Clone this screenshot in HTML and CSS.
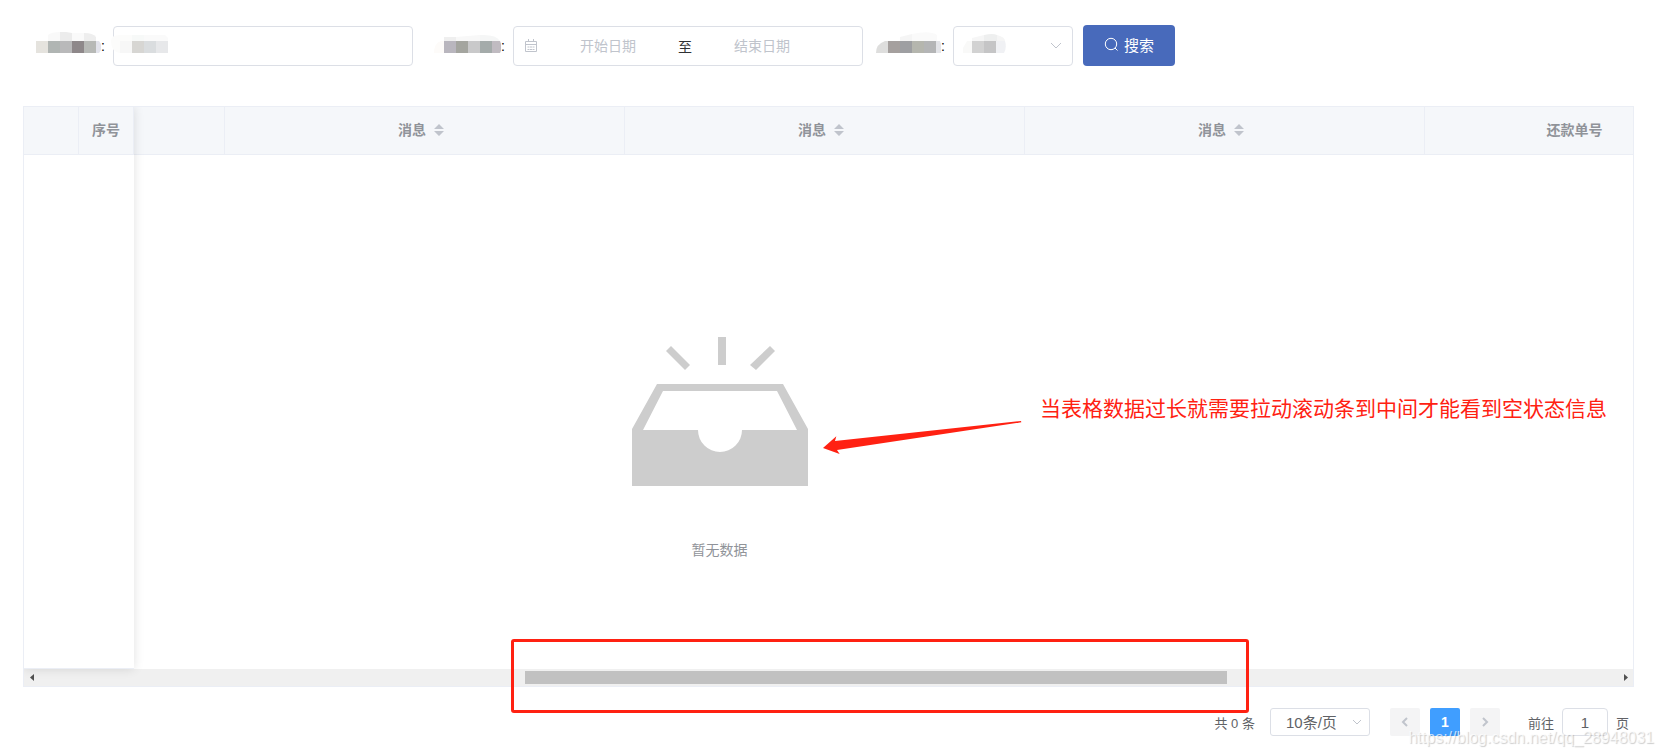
FILE: index.html
```html
<!DOCTYPE html>
<html lang="zh-CN">
<head>
  <meta charset="UTF-8">
  <meta name="viewport" content="width=device-width, initial-scale=1.0">
  <title>消息</title>
  <link rel="stylesheet" href="styles.css">
</head>
<body>

  <div class="page">
    <form class="search-form">
      <div class="form-item">
        <label class="form-label" for="keyword">
          <svg class="mosaic" width="65" height="22" viewBox="0 0 65 22">
            <path fill="#f9f9f9" d="M12 9V3q3-3 12-3v9z"/>
            <path fill="#ececec" d="M24 0h6l6 1v8H24z"/>
            <path fill="#fafafa" d="M36 1h12v8H36z"/>
            <path fill="#eeeeee" d="M48 1q9 0 12 4v4H48z"/>
            <path fill="#e5e3de" d="M0 9h12v12H0z"/>
            <path fill="#b0b5b3" d="M12 9h12v12H12z"/>
            <path fill="#b9b9ba" d="M24 9h12v12H24z"/>
            <path fill="#8e888a" d="M36 9h12v12H36z"/>
            <path fill="#b7b9b6" d="M48 9h12v12H48z"/>
            <path fill="#e2e3eb" d="M60 9h3l2 3v6l-2 3h-3z"/>
          </svg>:
        </label>
        <div class="field field-text">
          <input class="input" id="keyword" type="text">
          <svg class="mosaic-value" width="57" height="22" viewBox="0 0 57 22">
            <path fill="#fcfcfb" d="M0 9q0-6 9-6h12v6H9v12Q0 20 0 9z"/>
            <path fill="#f7f9f8" d="M21 3h12v6H21z"/>
            <path fill="#fafafa" d="M33 3h21l3 3v3H33z"/>
            <path fill="#f7f7f7" d="M9 9h12v12H9z"/>
            <path fill="#d7d6d3" d="M21 9h12v12H21z"/>
            <path fill="#dadddf" d="M33 9h12v12H33z"/>
            <path fill="#e7e8ea" d="M45 9h12v12H45z"/>
          </svg>
        </div>
      </div>

      <div class="form-item form-item-date">
        <label class="form-label" for="start-date">
          <svg class="mosaic" width="67" height="22" viewBox="0 0 67 22">
            <path fill="#efefef" d="M10 5h12v4H10z"/>
            <path fill="#f8f8f8" d="M22 5l24-2v6H22z"/>
            <path fill="#f5f6f6" d="M46 3q16-1 20 6H46z"/>
            <path fill="#fdfbf9" d="M0 21q0-10 7-12h3v12z"/>
            <path fill="#b9b6be" d="M10 9h12v12H10z"/>
            <path fill="#a4a59f" d="M22 9h12v12H22z"/>
            <path fill="#c9c9ca" d="M34 9h12v12H34z"/>
            <path fill="#a4abaa" d="M46 9h12v12H46z"/>
            <path fill="#c0bbc1" d="M58 9h8q3 7 0 12h-8z"/>
          </svg>:
        </label>
        <div class="field date-range">
          <svg class="date-icon" width="14" height="14" viewBox="0 0 14 14" fill="none" stroke="#c0c4cc">
            <path d="M1.5 2.5h11v10h-11zM1.5 5.5h11M4.5 0v3M9.5 0v3M3.5 8h2M6 8h2M8.500 8h2M3.500 10.500h2M6 10.500h2M8.500 10.500h2"/>
          </svg>
          <input class="date-input" id="start-date" type="text" placeholder="开始日期">
          <span class="date-separator">至</span>
          <input class="date-input" type="text" placeholder="结束日期" aria-label="结束日期">
        </div>
      </div>

      <div class="form-item">
        <label class="form-label" for="status">
          <svg class="mosaic" width="65" height="22" viewBox="0 0 65 22">
            <path fill="#f5f5f5" d="M24 9V5l12-3v7z"/>
            <path fill="#fafafa" d="M36 9V2q18-4 25 1v6z"/>
            <path fill="#dededd" d="M0 21q0-9 9-12h3v12z"/>
            <path fill="#a5a09e" d="M12 9h12v12H12z"/>
            <path fill="#9e9fa2" d="M24 9h12v12H24z"/>
            <path fill="#b5b6ae" d="M36 9h12v12H36z"/>
            <path fill="#b4b5b6" d="M48 9h12v12H48z"/>
            <path fill="#e3e4e8" d="M60 9h4l2 6-1 6h-5z"/>
          </svg>:
        </label>
        <div class="field field-select">
          <select class="input" id="status"><option></option></select>
          <svg class="mosaic-value mosaic-select" width="43" height="22" viewBox="0 0 43 22">
            <path fill="#f6f6f6" d="M9 9V6l12-3v6z"/>
            <path fill="#eeefef" d="M21 3q9-2 13 0v6H21z"/>
            <path fill="#f5f5f5" d="M34 3q8 2 8 6h-8z"/>
            <path fill="#f9f9f8" d="M0 21V16l4-7h5v12z"/>
            <path fill="#d2d2d2" d="M9 9h12v12H9z"/>
            <path fill="#c5c5c6" d="M21 9h12v12H21z"/>
            <path fill="#f0f1f4" d="M33 9h9q2 7-1 12h-8z"/>
          </svg>
          <svg class="arrow-down" width="12" height="8" viewBox="0 0 12 8" fill="none" stroke="#c0c4cc">
            <path d="M1 1l5 5 5-5"/>
          </svg>
        </div>
      </div>

      <button class="btn-search" type="button">
        <svg width="15" height="15" viewBox="0 0 15 15" fill="none" stroke="#fff">
          <circle cx="7" cy="7" r="5.700"/>
          <path d="M11 11l2.500 2.500"/>
        </svg>
        搜索
      </button>
    </form>

    <div class="table-wrapper">
      <table class="table">
        <colgroup>
          <col class="col-start">
          <col class="col-msg">
          <col class="col-msg">
          <col class="col-msg">
          <col class="col-order">
        </colgroup>
        <thead>
          <tr>
            <th></th>
            <th>消息<svg class="sort" width="10" height="12" viewBox="0 0 10 12"><path d="M0 5l5-5 5 5zM0 7h10l-5 5z"/></svg></th>
            <th>消息<svg class="sort" width="10" height="12" viewBox="0 0 10 12"><path d="M0 5l5-5 5 5zM0 7h10l-5 5z"/></svg></th>
            <th>消息<svg class="sort" width="10" height="12" viewBox="0 0 10 12"><path d="M0 5l5-5 5 5zM0 7h10l-5 5z"/></svg></th>
            <th>还款单号</th>
          </tr>
        </thead>
      </table>

      <div class="empty-block">
        <svg width="176" height="150" viewBox="0 0 176 150" fill="#cdcdcd">
          <path d="M86 0h8v28h-8z"/>
          <path d="M34 14l5-5 19 19-5 5z"/>
          <path d="M138 9l5 5-19 19-6-5z"/>
          <path fill-rule="evenodd" d="M25 47h126l25 45v57H0V92zM31 54L11 93h55a22 22 0 0 0 44 0h55L145 54z"/>
        </svg>
        <p class="empty-text">暂无数据</p>
      </div>

      <!-- 横向滚动条 -->
      <div class="scrollbar">
        <svg width="17" height="17" viewBox="0 0 17 17"><path d="M10 5v7L6 8.500z"/></svg>
        <div class="scroll-track"><div class="scroll-thumb"></div></div>
        <svg width="17" height="17" viewBox="0 0 17 17"><path d="M8 5v7l4-3.500z"/></svg>
      </div>

      <!-- 左侧固定列 -->
      <div class="table-fixed">
        <table class="table">
          <thead>
            <tr>
              <th></th>
              <th>序号</th>
            </tr>
          </thead>
        </table>
      </div>
    </div>

    <div class="pagination">
      <span class="total">共 0 条</span>
      <div class="page-size">
        <select aria-label="每页条数"><option>10条/页</option></select>
        <svg class="arrow-down" width="10" height="7" viewBox="0 0 10 7" fill="none" stroke="#c0c4cc">
          <path d="M1 1l4 4 4-4"/>
        </svg>
      </div>
      <div class="pager">
        <button type="button" disabled aria-label="上一页">
          <svg width="8" height="12" viewBox="0 0 8 12"><path d="M6 2L2 6l4 4"/></svg>
        </button>
        <button class="active" type="button">1</button>
        <button type="button" disabled aria-label="下一页">
          <svg width="8" height="12" viewBox="0 0 8 12"><path d="M2 2l4 4-4 4"/></svg>
        </button>
      </div>
      <label class="jump">前往 <input type="text" value="1"> 页</label>
    </div>
  </div>

  <!-- 标注 -->
  <svg class="note-arrow" width="200" height="36" viewBox="0 0 600 108">
    <path fill="#ff2112" d="M0 84l40-35-4 14L594 3l1 4L42 90l8 12z"/>
  </svg>
  <p class="note-text">当表格数据过长就需要拉动滚动条到中间才能看到空状态信息</p>
  <div class="note-box"></div>
  <div class="watermark">https://blog.csdn.net/qq_28948031</div>

</body>
</html>
```
FILE: styles.css
```css
* {
  box-sizing: border-box;
}

body {
  position: relative;
  margin: 0;
  overflow-x: hidden;
  font-family: "Liberation Sans", "Noto Sans CJK SC", sans-serif;
  font-size: 14px;
  color: #606266;
  background-color: #fff;
}

input,
select,
button {
  font-family: inherit;
}

select {
  appearance: none;
}

.page {
  padding: 25px 27px 20px 23px;
}

/* 搜索栏 */
.search-form {
  display: flex;
  align-items: flex-end;
  margin-bottom: 40px;
}

.form-item {
  display: flex;
  align-items: center;
  margin-right: 10px;
}

.form-item-date {
  margin-right: 0;
}

.form-label {
  display: flex;
  align-items: center;
  justify-content: flex-end;
  width: 90px;
  padding-right: 8px;
  color: #000;
}

.mosaic {
  margin-bottom: 6px;
}

.field {
  position: relative;
  height: 40px;
}

.field-text {
  width: 300px;
}

.field-select {
  width: 120px;
}

.input {
  display: block;
  width: 100%;
  height: 40px;
  padding: 0 15px;
  border: 1px solid #dcdfe6;
  border-radius: 4px;
  background-color: #fff;
  font-size: 14px;
  color: #606266;
}

.mosaic-value {
  position: absolute;
  left: -2px;
  top: 6px;
}

.mosaic-select {
  left: 10px;
}

.arrow-down {
  position: absolute;
  right: 11px;
  top: 16px;
  pointer-events: none;
}

.date-range {
  display: flex;
  align-items: center;
  width: 350px;
  padding: 0 10px;
  border: 1px solid #dcdfe6;
  border-radius: 4px;
}

.date-icon {
  margin-right: 6px;
}

.date-input {
  width: 128px;
  padding: 0;
  border: none;
  font-size: 14px;
  text-align: center;
}

.date-input::placeholder {
  color: #c0c4cc;
}

.date-separator {
  width: 26px;
  text-align: center;
  color: #303133;
}

.btn-search {
  display: flex;
  align-items: center;
  gap: 5px;
  height: 41px;
  padding: 0 21px 2px;
  border: none;
  border-radius: 4px;
  background-color: #486abb;
  font-size: 15px;
  color: #fff;
  cursor: pointer;
}

/* 表格 */
.table-wrapper {
  position: relative;
  overflow: hidden;
  border: 1px solid #ebeef5;
}

.table {
  width: 1701px;
  table-layout: fixed;
  border-collapse: separate;
  border-spacing: 0;
}

.col-start {
  width: 201px;
}

.col-msg {
  width: 400px;
}

.col-order {
  width: 300px;
}

.table th {
  height: 48px;
  padding: 0 0 3px;
  border-right: 1px solid #ebeef5;
  border-bottom: 1px solid #ebeef5;
  background-color: #f5f7fa;
  color: #909399;
  font-weight: bold;
  text-align: center;
}

.sort {
  margin: 0 7px 0 8px;
  vertical-align: -1px;
  fill: #c0c4cc;
}

.table-fixed {
  position: absolute;
  top: 0;
  bottom: 17px;
  left: 0;
  width: 110px;
  border-bottom: 1px solid #ebeef5;
  box-shadow: 0 0 10px rgba(0, 0, 0, 0.12);
}

.table-fixed .table {
  width: 100%;
}

/* 内容宽度 3609，已滚动 1109 */
.empty-block {
  display: flex;
  flex-direction: column;
  align-items: center;
  width: 3609px;
  margin-left: -1109px;
  padding: 182px 0 109px;
}

.empty-text {
  margin: 53px 0 0;
  line-height: 20px;
  color: #909399;
}

.scrollbar {
  display: flex;
  height: 17px;
  background-color: #f0f0f0;
  fill: #505050;
}

.scroll-track {
  flex: 1;
  padding: 2px 0;
}

.scroll-thumb {
  width: 44.6%;
  height: 13px;
  margin-left: 30.7%;
  background-color: #c1c1c1;
}

/* 分页 */
.pagination {
  display: flex;
  align-items: center;
  justify-content: flex-end;
  margin-top: 21px;
  padding-right: 5px;
  font-size: 13px;
}

.total {
  margin-right: 15px;
}

.page-size {
  position: relative;
  margin-right: 20px;
}

.page-size select {
  display: block;
  width: 100px;
  height: 28px;
  padding: 0 15px;
  border: 1px solid #dcdfe6;
  border-radius: 3px;
  background-color: #fff;
  font-size: 15px;
  color: #606266;
}

.page-size .arrow-down {
  right: 8px;
  top: 11px;
}

.pager {
  display: flex;
  gap: 10px;
  margin-right: 28px;
}

.pager button {
  display: flex;
  align-items: center;
  justify-content: center;
  width: 30px;
  height: 28px;
  padding: 0;
  border: none;
  border-radius: 2px;
  background-color: #f4f4f5;
}

.pager svg {
  fill: none;
  stroke: #c0c4cc;
  stroke-width: 2;
}

.pager .active {
  background-color: #409eff;
  font-size: 14px;
  font-weight: bold;
  color: #fff;
}

.jump {
  display: flex;
  align-items: center;
  gap: 8px;
}

.jump input {
  width: 46px;
  height: 28px;
  padding: 0;
  border: 1px solid #dcdfe6;
  border-radius: 4px;
  font-size: 15px;
  color: #606266;
  text-align: center;
}

/* 标注 */
.note-arrow {
  position: absolute;
  left: 823px;
  top: 420px;
}

.note-text {
  position: absolute;
  left: 1040px;
  top: 394px;
  margin: 0;
  font-size: 21px;
  line-height: 30px;
  color: #ff2112;
  white-space: nowrap;
}

.note-box {
  position: absolute;
  left: 511px;
  top: 639px;
  width: 738px;
  height: 74px;
  border: 3px solid #ff2112;
  border-radius: 3px;
}

.watermark {
  position: absolute;
  right: 7px;
  top: 728px;
  font-size: 16px;
  line-height: 20px;
  color: rgba(255, 255, 255, 0.7);
  text-shadow: 1px 1px 1px rgba(0, 0, 0, 0.2);
}
```
